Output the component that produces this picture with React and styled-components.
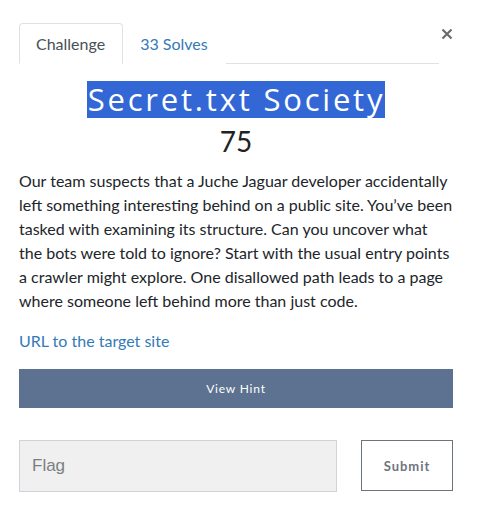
import React from 'react';
import styled, { createGlobalStyle } from 'styled-components';

const GlobalStyle = createGlobalStyle`
  body {
    margin: 0;
    background: #fff;
    font-family: Lato, "Liberation Sans", sans-serif;
    color: #212529;
  }
`;

const Modal = styled.div`
  width: 477px;
  height: 510px;
  box-sizing: border-box;
  padding: 23px 24px 0 19px;
`;

const TopBar = styled.div`
  display: flex;
  align-items: flex-start;
`;

const Tabs = styled.nav`
  display: flex;
  width: 420px;
  border-bottom: 1px solid #dee2e6;
`;

const Tab = styled.div`
  height: 41px;
  box-sizing: border-box;
  display: flex;
  align-items: center;
  padding: 0 17px 0 16px;
  font-size: 16px;
  margin-bottom: -1px;
  border: 1px solid ${(p) => (p.$active ? '#dee2e6' : 'transparent')};
  border-bottom-color: ${(p) => (p.$active ? '#fff' : 'transparent')};
  border-radius: 4px 4px 0 0;
  background: #fff;
  color: ${(p) => (p.$active ? '#495057' : '#337ab7')};
`;

const Close = styled.button`
  margin-left: auto;
  padding: 0;
  border: 0;
  background: none;
  color: #6c6c6c;
  line-height: 1;
  display: flex;
`;

const Heading = styled.h2`
  margin: 17px 0 0;
  text-align: center;
  font-family: "Open Sans", sans-serif;
  font-weight: 400;
  font-size: 31px;
  line-height: 37px;
`;

const Selected = styled.span`
  display: inline-block;
  line-height: 37px;
  padding-left: 1px;
  background: #3367d6;
  color: #fff;
  letter-spacing: 2.8px;
`;

const Points = styled.h3`
  margin: 6px 0 0;
  text-align: center;
  font-weight: 400;
  font-size: 28px;
  line-height: 34px;
  color: #222;
`;

const Description = styled.p`
  margin: 11px 0 0;
  font-size: 16px;
  line-height: 24px;
  color: #212529;
`;

const Link = styled.a`
  display: block;
  margin-top: 16px;
  font-size: 16px;
  line-height: 24px;
  color: #337ab7;
  text-decoration: none;
`;

const HintButton = styled.button`
  display: block;
  width: 100%;
  height: 39px;
  margin-top: 16px;
  border: 0;
  background: #5c7290;
  color: #fff;
  font-family: Lato, sans-serif;
  font-size: 12px;
  letter-spacing: 0.8px;
`;

const FlagRow = styled.form`
  display: flex;
  gap: 24px;
  margin-top: 32px;
`;

const FlagInput = styled.input`
  width: 318px;
  height: 52px;
  box-sizing: border-box;
  padding: 0 12px;
  background: #f0f0f0;
  border: 1px solid #ced4da;
  font-family: "Liberation Sans", Arial, sans-serif;
  font-size: 17px;
  &::placeholder {
    color: #7b7f84;
  }
`;

const SubmitButton = styled.button`
  width: 92px;
  height: 51px;
  box-sizing: border-box;
  border: 1px solid #6c757d;
  background: #fff;
  color: #6c757d;
  font-family: Lato, sans-serif;
  font-weight: 700;
  font-size: 13px;
  letter-spacing: 1px;
`;

const CloseIcon = () => (
  <svg width="12" height="12" viewBox="0 0 12 12" style={{ marginTop: 5 }}>
    <path d="M1.5 1.5 L10.5 10.5 M10.5 1.5 L1.5 10.5" stroke="currentColor" strokeWidth="2.2" />
  </svg>
);

export default function App() {
  return (
    <>
      <GlobalStyle />
      <Modal>
        <TopBar>
          <Tabs>
            <Tab $active>Challenge</Tab>
            <Tab>33 Solves</Tab>
          </Tabs>
          <Close aria-label="Close">
            <CloseIcon />
          </Close>
        </TopBar>
        <Heading>
          <Selected>Secret.txt Society</Selected>
        </Heading>
        <Points>75</Points>
        <Description>
          Our team suspects that a Juche Jaguar developer accidentally left something interesting
          behind on a public site. You’ve been tasked with examining its structure. Can you uncover
          what the bots were told to ignore? Start with the usual entry points a crawler might
          explore. One disallowed path leads to a page where someone left behind more than just
          code.
        </Description>
        <Link href="#">URL to the target site</Link>
        <HintButton type="button">View Hint</HintButton>
        <FlagRow onSubmit={(e) => e.preventDefault()}>
          <FlagInput placeholder="Flag" />
          <SubmitButton type="submit">Submit</SubmitButton>
        </FlagRow>
      </Modal>
    </>
  );
}
